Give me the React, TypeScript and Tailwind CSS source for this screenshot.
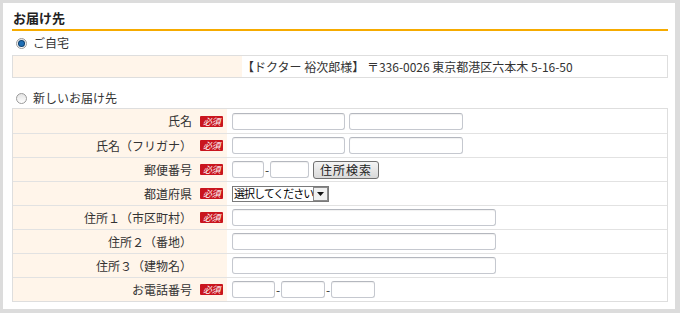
type Row = {
  label: string;
  required?: boolean;
  field: React.ReactNode;
};

function Input({ w }: { w: string }) {
  return (
    <span
      className={`${w} h-[17px] inline-block bg-white border border-[#c5c8cf] border-t-[#b4b7be] rounded-[3px] shadow-[inset_0_1px_1px_rgba(0,0,0,0.06)]`}
    />
  );
}

function Dash() {
  return <span className="w-[6px] text-center text-[12px] leading-none text-[#333]">-</span>;
}

function Radio({ checked }: { checked?: boolean }) {
  return (
    <span className="w-[11px] h-[11px] rounded-full border border-[#9a9a9a] bg-gradient-to-b from-[#e4e4e4] to-white flex items-center justify-center">
      {checked && (
        <span className="w-[5px] h-[5px] rounded-full bg-[#1f6fb5] shadow-[0_0_0_1px_#0c3f6e]" />
      )}
    </span>
  );
}

function Required() {
  return (
    <span className="w-[23px] h-[11px] rounded-[1px] bg-[#c9151e] text-white text-[9px] leading-[11px] text-center italic tracking-[-0.5px]">
      必須
    </span>
  );
}

const rows: Row[] = [
  {
    label: "氏名",
    required: true,
    field: (
      <div className="flex gap-[4px]">
        <Input w="w-[113px]" />
        <Input w="w-[114px]" />
      </div>
    ),
  },
  {
    label: "氏名（フリガナ）",
    required: true,
    field: (
      <div className="flex gap-[4px]">
        <Input w="w-[113px]" />
        <Input w="w-[114px]" />
      </div>
    ),
  },
  {
    label: "郵便番号",
    required: true,
    field: (
      <div className="flex items-center">
        <Input w="w-[32px]" />
        <Dash />
        <Input w="w-[39px]" />
        <button className="ml-[4px] w-[66px] h-[18px] border border-[#707070] rounded-[3px] bg-gradient-to-b from-[#f4f4f4] to-[#d9d9d9] text-[12px] leading-none text-[#222] tracking-[1px]">
          住所検索
        </button>
      </div>
    ),
  },
  {
    label: "都道府県",
    required: true,
    field: (
      <div className="w-[97px] h-[16px] border border-[#7a7a7a] bg-white flex items-center">
        <span className="flex-1 pl-[1px] text-[11px] tracking-[-1px] leading-none text-black whitespace-nowrap">
          選択してください
        </span>
        <span className="w-[15px] h-[14px] border border-[#8a8a8a] bg-[#f0f0f0] flex items-center justify-center">
          <svg width="7" height="4" viewBox="0 0 7 4">
            <path d="M0 0h7L3.5 4z" fill="#111" />
          </svg>
        </span>
      </div>
    ),
  },
  { label: "住所１（市区町村）", required: true, field: <Input w="w-[264px]" /> },
  { label: "住所２（番地）", field: <Input w="w-[264px]" /> },
  { label: "住所３（建物名）", field: <Input w="w-[264px]" /> },
  {
    label: "お電話番号",
    required: true,
    field: (
      <div className="flex items-center">
        <Input w="w-[43px]" />
        <Dash />
        <Input w="w-[44px]" />
        <Dash />
        <Input w="w-[44px]" />
      </div>
    ),
  },
];

export default function App() {
  return (
    <div
      className="w-[680px] h-[313px] bg-[#dcdcdc] pt-[3px] pl-[3px] pr-[5px] pb-[4px] text-[#333]"
      style={{ fontFamily: '"Noto Sans CJK JP", "Noto Sans", sans-serif' }}
    >
      <div className="h-full bg-white pl-[9px] pr-[7px]">
        {/* 見出し */}
        <h2 className="pt-[6px] pb-[2px] pl-[1px] leading-[18px] text-[13px] font-bold text-[#222] border-b-2 border-[#f6ab00]">
          お届け先
        </h2>

        {/* ご自宅 */}
        <div className="h-[24px] flex items-center gap-[6px] pl-[4px]">
          <Radio checked />
          <span className="text-[12px] leading-none">ご自宅</span>
        </div>
        <div className="h-[23px] flex border border-[#dedede]">
          <div className="w-[229px] bg-[#fff5ea]" />
          <div className="flex-1 flex items-center text-[12px] leading-none whitespace-nowrap">
            【ドクター 裕次郎様】 〒336-0026 東京都港区六本木 5-16-50
          </div>
        </div>

        {/* 新しいお届け先 */}
        <div className="mt-[10px] h-[20px] flex items-center gap-[6px] pl-[4px]">
          <Radio />
          <span className="text-[12px] leading-none">新しいお届け先</span>
        </div>
        <div className="border border-[#dedede] flex flex-col">
          {rows.map((row, i) => (
            <div
              key={row.label}
              className={`h-[24px] flex ${i === 0 ? "h-[23px]" : "border-t border-[#e2e2e2]"}`}
            >
              <div className="w-[214px] bg-[#fff5ea] flex items-center justify-end gap-[8px] pr-[4px]">
                <span className="text-[12px] leading-none whitespace-nowrap">{row.label}</span>
                {row.required ? <Required /> : <span className="w-[23px]" />}
              </div>
              <div className="flex-1 flex items-center pl-[5px]">{row.field}</div>
            </div>
          ))}
        </div>
      </div>
    </div>
  );
}
